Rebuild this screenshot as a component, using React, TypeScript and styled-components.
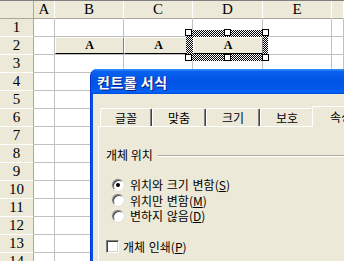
import React from 'react';
import styled, { createGlobalStyle, css } from 'styled-components';

const GlobalStyle = createGlobalStyle`
  html, body {
    margin: 0;
    padding: 0;
    width: 344px;
    height: 261px;
    overflow: hidden;
    background: #fff;
  }
`;

const Screen = styled.div`
  position: relative;
  width: 344px;
  height: 261px;
  overflow: hidden;
`;

const Sheet = styled.div`
  display: grid;
  grid-template-columns: 34px 21px 69px 69px 70px 69px 1fr;
  grid-auto-rows: 18px;
  border-top: 1px solid #808080;
`;

const headFont = css`
  font-family: "Liberation Serif", "DejaVu Serif", serif;
  font-size: 15px;
  color: #000;
  display: flex;
  align-items: center;
  justify-content: center;
  box-sizing: border-box;
`;

const ColHead = styled.div<{ $corner?: boolean }>`
  ${headFont};
  background: #ece9d8;
  border-bottom: 1px solid #aca899;
  border-right: 1px solid ${p => (p.$corner ? '#aca899' : '#fff')};
`;

const RowHead = styled.div`
  ${headFont};
  background: #ece9d8;
  border-bottom: 1px solid #fff;
  border-right: 1px solid #aca899;
`;

const Cell = styled.div`
  position: relative;
  background: #fff;
  box-sizing: border-box;
  border-right: 1px solid #c0c0c0;
  border-bottom: 1px solid #c0c0c0;
`;

// form buttons drawn over row 2
const SheetButton = styled.div<{ $selected?: boolean }>`
  position: absolute;
  left: 0;
  top: 0;
  right: -1px;
  bottom: 0;
  z-index: ${p => (p.$selected ? 3 : 1)};
  box-sizing: border-box;
  background: #ece9d8;
  border-top: 1px solid #fff;
  border-left: 1px solid #fff;
  border-right: 1px solid #808080;
  border-bottom: 1px solid #000;
  display: flex;
  align-items: center;
  justify-content: center;
  font-family: "Liberation Serif", "DejaVu Serif", serif;
  font-size: 12px;
  font-weight: bold;
`;

const SelectFrame = styled.div`
  position: absolute;
  left: -7px;
  top: -7px;
  width: 82px;
  height: 31px;
  z-index: 2;
  background: repeating-conic-gradient(#000 0 25%, #fff 0 50%) 0 0 / 2px 2px;
`;

const Handle = styled.div<{ $x: number; $y: number }>`
  position: absolute;
  left: ${p => p.$x}px;
  top: ${p => p.$y}px;
  width: 5px;
  height: 5px;
  z-index: 4;
  background: #fff;
  border: 1px solid #000;
`;

/* dialog */

const Dialog = styled.div`
  position: absolute;
  left: 90px;
  top: 69px;
  width: 300px;
  height: 230px;
  z-index: 10;
  display: flex;
  flex-direction: column;
  background: #0054e3;
  border-left: 1px solid #0831d9;
  border-radius: 7px 7px 0 0;
  box-sizing: border-box;
`;

const TitleBar = styled.div`
  height: 25px;
  flex-shrink: 0;
  display: flex;
  align-items: center;
  padding-left: 6px;
  border-radius: 7px 7px 0 0;
  background: linear-gradient(
    180deg,
    #3d95ff 0%,
    #0a62f0 10%,
    #0054e3 45%,
    #0058ea 80%,
    #0064f8 92%,
    #0046d6 100%
  );
  color: #fff;
  font-family: "Noto Sans CJK KR", sans-serif;
  font-weight: bold;
  font-size: 14px;
  letter-spacing: 0.5px;
  text-shadow: 1px 1px #0a1883;
`;

const Body = styled.div`
  flex: 1;
  margin-left: 2px;
  background: #ece9d8;
  padding: 12px 0 0 5px;
  font-family: "Noto Sans CJK KR", sans-serif;
  font-size: 12px;
  color: #000;
`;

const TabStrip = styled.div`
  display: flex;
  align-items: flex-end;
  height: 20px;
  padding-left: 2px;
  position: relative;
  z-index: 1;
`;

const Tab = styled.div<{ $active?: boolean; $w: number }>`
  width: ${p => p.$w}px;
  height: 18px;
  box-sizing: border-box;
  display: flex;
  align-items: center;
  justify-content: center;
  background: #ece9d8;
  border-top: 1px solid #fff;
  border-left: 1px solid #fff;
  border-right: 1px solid #404040;
  box-shadow: inset -1px 0 #808080;
  border-radius: 2px 2px 0 0;
  ${p =>
    p.$active &&
    css`
      height: 21px;
      margin: 0 -2px 0 -2px;
      margin-bottom: -1px;
      padding-bottom: 1px;
    `}
`;

const Panel = styled.div`
  border-top: 1px solid #fff;
  border-left: 1px solid #fff;
  height: 200px;
  padding: 21px 0 0 7px;
`;

const GroupHeader = styled.div`
  display: flex;
  align-items: center;
  height: 14px;
  line-height: 14px;
  gap: 5px;
`;

const GroupLine = styled.div`
  flex: 1;
  border-top: 1px solid #aca899;
  border-bottom: 1px solid #fff;
  margin-top: 2px;
`;

const OptionList = styled.div`
  display: flex;
  flex-direction: column;
  padding: 15px 0 0 6px;
`;

const OptionRow = styled.div`
  display: flex;
  align-items: center;
  gap: 6px;
  height: 15.5px;
  word-spacing: 1px;
`;

const Radio = styled.span<{ $checked?: boolean }>`
  position: relative;
  width: 12px;
  height: 12px;
  box-sizing: border-box;
  border-radius: 50%;
  background: #fff;
  border: 1px solid;
  border-color: #808080 #fff #fff #808080;
  box-shadow: inset 1px 1px #404040, 0 0 0 0.5px #d4d0c8;
  ${p =>
    p.$checked &&
    css`
      &::after {
        content: '';
        position: absolute;
        left: 3px;
        top: 3px;
        width: 4px;
        height: 4px;
        border-radius: 50%;
        background: #000;
      }
    `}
`;

const CheckRow = styled.div`
  display: flex;
  align-items: center;
  gap: 4px;
  margin-top: 16px;
  height: 14px;
  word-spacing: 1px;
`;

const CheckBox = styled.span`
  width: 13px;
  height: 13px;
  box-sizing: border-box;
  background: #fff;
  border: 1px solid;
  border-color: #808080 #fff #fff #808080;
  box-shadow: inset 1px 1px #404040, inset -1px -1px #d4d0c8;
`;

const U = styled.span`
  text-decoration: underline;
  text-underline-offset: 1px;
`;

const columns = ['A', 'B', 'C', 'D', 'E', ''];

export default function App() {
  const rows = Array.from({ length: 14 }, (_, i) => i + 1);
  return (
    <Screen>
      <GlobalStyle />
      <Sheet>
        <ColHead $corner />
        {columns.map((c, i) => (
          <ColHead key={i}>{c}</ColHead>
        ))}
        {rows.map(r => (
          <React.Fragment key={r}>
            <RowHead>{r}</RowHead>
            {columns.map((c, i) => (
              <Cell key={i}>
                {r === 2 && (c === 'B' || c === 'C') && <SheetButton>A</SheetButton>}
                {r === 2 && c === 'D' && (
                  <>
                    <SelectFrame />
                    <SheetButton $selected>A</SheetButton>
                    <Handle $x={-8} $y={-8} />
                    <Handle $x={31} $y={-8} />
                    <Handle $x={69} $y={-8} />
                    <Handle $x={-8} $y={17} />
                    <Handle $x={31} $y={17} />
                    <Handle $x={69} $y={17} />
                  </>
                )}
              </Cell>
            ))}
          </React.Fragment>
        ))}
      </Sheet>

      <Dialog>
        <TitleBar>컨트롤 서식</TitleBar>
        <Body>
          <TabStrip>
            <Tab $w={52}>글꼴</Tab>
            <Tab $w={54}>맞춤</Tab>
            <Tab $w={54}>크기</Tab>
            <Tab $w={54}>보호</Tab>
            <Tab $w={58} $active>속성</Tab>
          </TabStrip>
          <Panel>
            <GroupHeader>
              <span>개체 위치</span>
              <GroupLine />
            </GroupHeader>
            <OptionList>
              <OptionRow>
                <Radio $checked />
                <span>위치와 크기 변함(<U>S</U>)</span>
              </OptionRow>
              <OptionRow>
                <Radio />
                <span>위치만 변함(<U>M</U>)</span>
              </OptionRow>
              <OptionRow>
                <Radio />
                <span>변하지 않음(<U>D</U>)</span>
              </OptionRow>
            </OptionList>
            <CheckRow>
              <CheckBox />
              <span>개체 인쇄(<U>P</U>)</span>
            </CheckRow>
          </Panel>
        </Body>
      </Dialog>
    </Screen>
  );
}
